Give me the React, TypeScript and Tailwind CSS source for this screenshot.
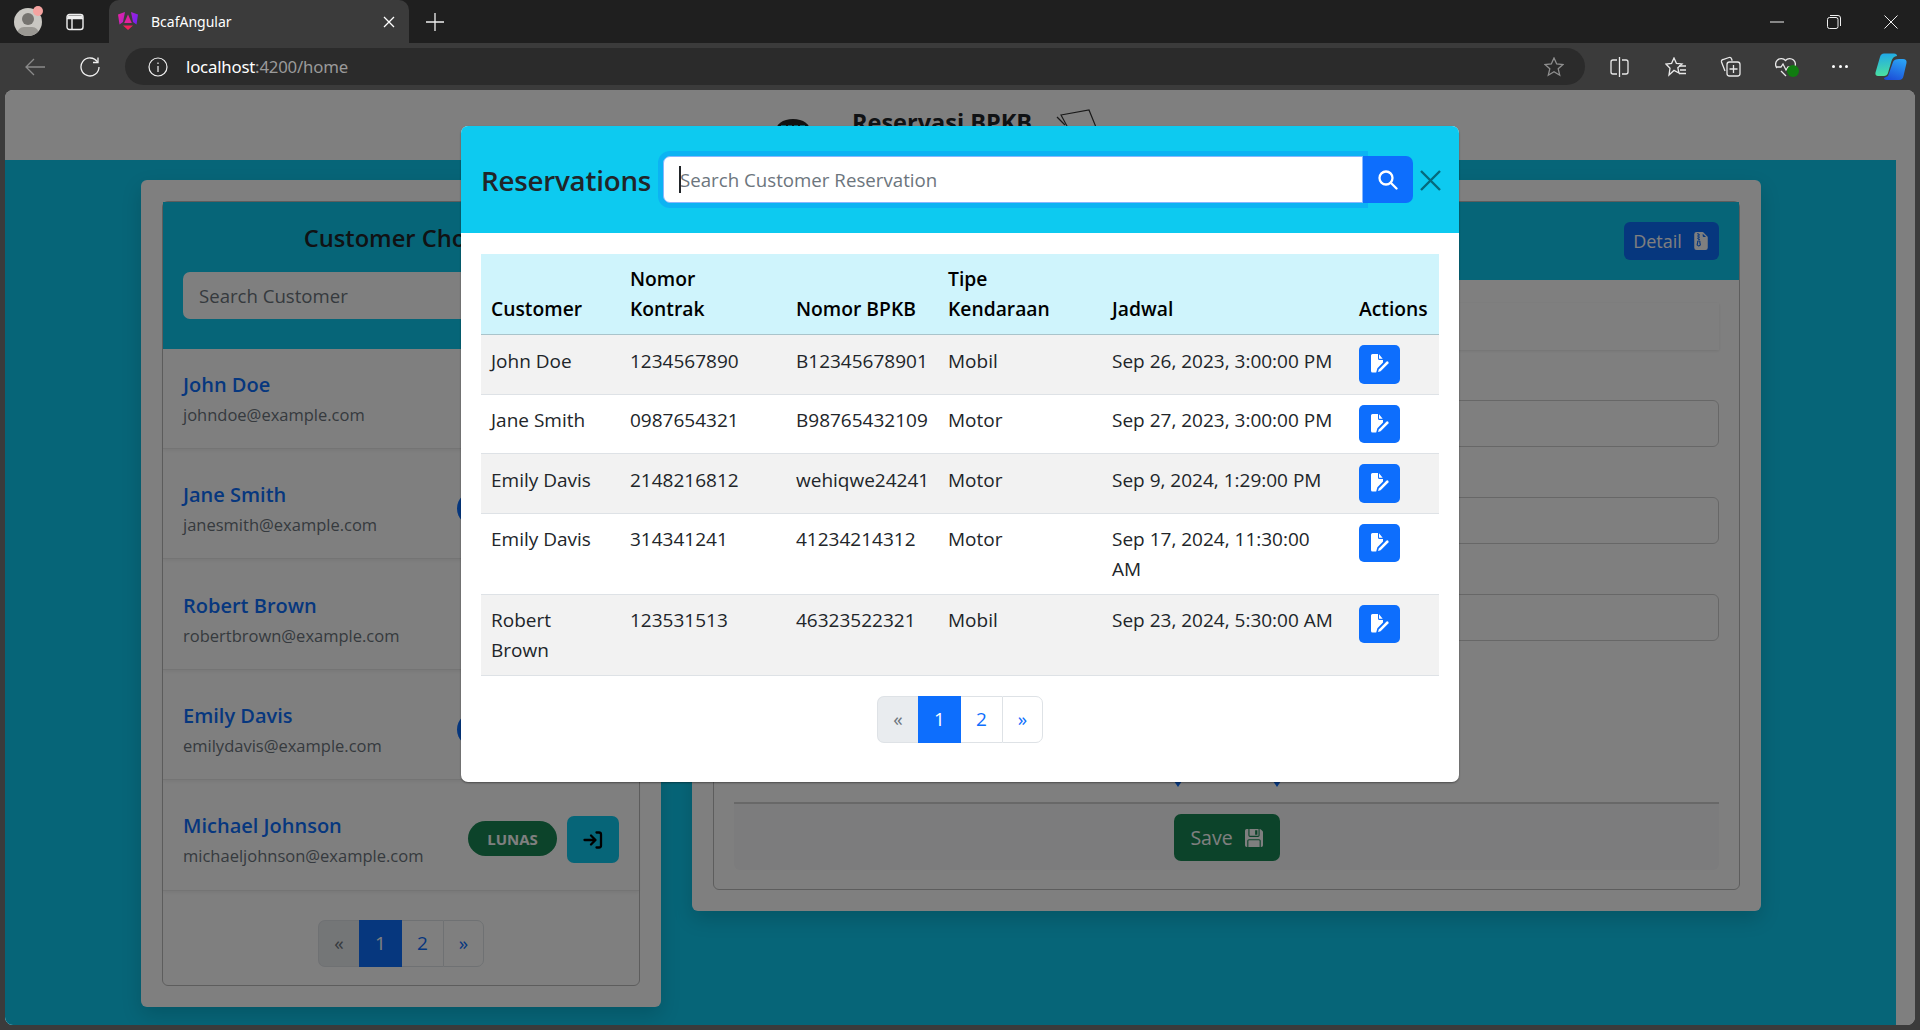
import { BsFileEarmarkZipFill, BsFloppyFill } from "react-icons/bs";

const font = "font-['Open_Sans','Noto_Sans',sans-serif]";

const customers = [
  { name: "John Doe", email: "johndoe@example.com", badge: null },
  { name: "Jane Smith", email: "janesmith@example.com", badge: "blue" },
  { name: "Robert Brown", email: "robertbrown@example.com", badge: null },
  { name: "Emily Davis", email: "emilydavis@example.com", badge: "blue" },
  { name: "Michael Johnson", email: "michaeljohnson@example.com", badge: "green" },
];

const reservations = [
  ["John Doe", "1234567890", "B12345678901", "Mobil", "Sep 26, 2023, 3:00:00 PM"],
  ["Jane Smith", "0987654321", "B98765432109", "Motor", "Sep 27, 2023, 3:00:00 PM"],
  ["Emily Davis", "2148216812", "wehiqwe24241", "Motor", "Sep 9, 2024, 1:29:00 PM"],
  ["Emily Davis", "314341241", "41234214312", "Motor", "Sep 17, 2024, 11:30:00\nAM"],
  ["Robert\nBrown", "123531513", "46323522321", "Mobil", "Sep 23, 2024, 5:30:00 AM"],
];

function FileEditIcon() {
  return (
    <svg width="22" height="20" viewBox="0 0 22 20" fill="white">
      <path d="M2 1.5A1.5 1.5 0 0 1 3.5 0H9v4.5A1.5 1.5 0 0 0 10.5 6H14v2.6l-5.6 5.6-1.2 4.3H3.500A1.500 1.500 0 0 1 2 17z" />
      <path d="M10 .3 13.700 4.700H10.500a.5.5 0 0 1-.5-.5z" />
      <path d="M17.600 7.600a1.300 1.300 0 0 1 1.800 1.800l-7.800 7.800-2.600.8.800-2.600z" />
    </svg>
  );
}

function Pagination() {
  return (
    <div className={`flex h-[47px] text-[19px] leading-none ${font}`}>
      <div className="flex w-[41px] items-center justify-center rounded-l-[7px] border border-r-0 border-[#dee2e6] bg-[#e9ecef] text-[#6c757d]">«</div>
      <div className="flex w-[43px] items-center justify-center bg-[#0d6efd] text-white">1</div>
      <div className="flex w-[41px] items-center justify-center border-y border-[#dee2e6] bg-white text-[#0d6efd]">2</div>
      <div className="flex w-[41px] items-center justify-center rounded-r-[7px] border border-[#dee2e6] bg-white text-[#0d6efd]">»</div>
    </div>
  );
}

function TabStrip() {
  return (
    <div className="flex h-[43px] bg-[#1f1f1f] text-white">
      <div className="flex w-[109px] items-center pl-[14px]">
        <div className="relative h-[28px] w-[28px] overflow-hidden rounded-full bg-[#c9c7c2]">
          <div className="absolute left-[8px] top-[5px] h-[12px] w-[12px] rounded-full bg-[#75736f]" />
          <div className="absolute left-[3px] top-[19px] h-[14px] w-[22px] rounded-full bg-[#9a9893]" />
        </div>
        <div className="absolute left-[33px] top-[6px] h-[10px] w-[10px] rounded-full bg-[#f5a3a0]" />
        <svg className="ml-[24px]" width="18" height="18" viewBox="0 0 18 18" fill="none" stroke="#f0f0f0" strokeWidth="1.400">
          <rect x="1" y="1.500" width="16" height="15" rx="2.500" />
          <path d="M1 5.500h16M6 5.500v11" />
          <path d="M1.500 2.500h15v3h-15z" fill="#f0f0f0" stroke="none" />
        </svg>
      </div>
      <div className="flex h-[43px] w-[300px] items-center rounded-t-[10px] bg-[#3b3b3b] pl-[9px] pr-[14px]">
        <svg width="20" height="21" viewBox="0 0 20 21">
          <defs>
            <linearGradient id="ng" x1="0" y1="0" x2="1" y2="0.300">
              <stop offset="0" stopColor="#f0229f" />
              <stop offset="1" stopColor="#7c22f0" />
            </linearGradient>
          </defs>
          <path d="M7 1 0 3.500l1.500 10L5 11zM13 1l7 2.500-1.500 10L15 11z" fill="url(#ng)" />
          <path d="M10 3.500 13.800 12H6.200z" fill="#e0229f" />
          <path d="M5 14.500h10L10 19z" fill="#f01f5c" />
        </svg>
        <span className="ml-[13px] flex-1 font-['Noto_Sans',sans-serif] text-[14px]">BcafAngular</span>
        <svg width="12" height="12" viewBox="0 0 12 12" stroke="white" strokeWidth="1.300">
          <path d="M1 1l10 10M11 1 1 11" />
        </svg>
      </div>
      <div className="flex w-[52px] items-center justify-center">
        <svg width="18" height="18" viewBox="0 0 18 18" stroke="#f0f0f0" strokeWidth="1.300">
          <path d="M9 0v18M0 9h18" />
        </svg>
      </div>
      <div className="flex-1" />
      <div className="flex w-[180px] items-center">
        <svg className="ml-[30px]" width="14" height="2" viewBox="0 0 14 2"><path d="M0 1h14" stroke="#f0f0f0" strokeWidth="1" /></svg>
        <svg className="ml-[43px]" width="14" height="14" viewBox="0 0 14 14" fill="none" stroke="#f0f0f0" strokeWidth="1">
          <rect x="0.500" y="2.500" width="10.500" height="11" rx="2" />
          <path d="M3 .5h8a2.500 2.500 0 0 1 2.500 2.500v8" />
        </svg>
        <svg className="ml-[43px]" width="14" height="14" viewBox="0 0 14 14" stroke="#f0f0f0" strokeWidth="1">
          <path d="M.5.5l13 13M13.500.5l-13 13" />
        </svg>
      </div>
    </div>
  );
}

function Toolbar() {
  return (
    <div className="flex h-[47px] items-center bg-[#3b3b3b] text-white">
      <svg className="ml-[25px]" width="20" height="18" viewBox="0 0 20 18" fill="none" stroke="#8a8a8a" strokeWidth="1.300">
        <path d="M20 9H1M9 1 1 9l8 8" />
      </svg>
      <svg className="ml-[35px]" width="20" height="20" viewBox="0 0 20 20" fill="none" stroke="#f0f0f0" strokeWidth="1.300">
        <path d="M17.500 5A9 9 0 1 0 19 10" />
        <path d="M18 .5V5.500H13" />
      </svg>
      <div className="ml-[25px] flex h-[37px] w-[1460px] items-center rounded-full bg-[#2b2b2b] pl-[23px] pr-[21px]">
        <svg width="20" height="20" viewBox="0 0 20 20" fill="none" stroke="#f0f0f0" strokeWidth="1.200">
          <circle cx="10" cy="10" r="9" />
          <path d="M10 9v6M10 5.500v1.500" />
        </svg>
        <span className="ml-[18px] font-['Noto_Sans',sans-serif] text-[16.800px] tracking-[-0.200px]">
          localhost<span className="text-[#9a9a9a]">:4200/home</span>
        </span>
        <div className="flex-1" />
        <svg width="20" height="20" viewBox="0 0 20 20" fill="none" stroke="#8f8f8f" strokeWidth="1.300">
          <path d="M10 1l2.700 6 6.300.6-4.800 4.200 1.500 6.400L10 14.800l-5.700 3.400 1.500-6.400L1 7.600 7.300 7z" />
        </svg>
      </div>
      <svg className="ml-[25px]" width="19" height="20" viewBox="0 0 19 20" fill="none" stroke="#e8e8e8" strokeWidth="1.300">
        <path d="M9.500 0v20M7 3H3a2 2 0 0 0-2 2v10a2 2 0 0 0 2 2h4M12 3h4a2 2 0 0 1 2 2v10a2 2 0 0 1-2 2h-4" />
      </svg>
      <svg className="ml-[36px]" width="21" height="20" viewBox="0 0 21 20" fill="none" stroke="#e8e8e8" strokeWidth="1.300">
        <path d="M9 1l2.400 5.300 5.600.6-4.200 3.800 1.200 5.400L9 13.400 4 18l1-6.800L1 7l5.600-.7z" />
        <path d="M14 9h7M15 13h6M14 16.500h7" />
      </svg>
      <svg className="ml-[34px]" width="21" height="21" viewBox="0 0 21 21" fill="none" stroke="#e8e8e8" strokeWidth="1.300">
        <path d="M5 15 1.500 6A2 2 0 0 1 3 3.500L9 1.500a2 2 0 0 1 2.500 1.200l.7 2" />
        <rect x="7" y="6" width="13" height="14" rx="2.500" />
        <path d="M13.500 9v8M9.500 13h8" />
      </svg>
      <div className="relative ml-[34px] h-[20px] w-[21px]">
        <svg width="21" height="20" viewBox="0 0 21 20" fill="none" stroke="#e8e8e8" strokeWidth="1.300">
          <path d="M2 11A5.500 5.500 0 0 1 10.500 3.500 5.500 5.500 0 0 1 19 11l-2 2M1 10h5l2-3 3 6 2-3h3M6 14l5 5" />
        </svg>
        <div className="absolute left-[12px] top-[8px] h-[12px] w-[12px] rounded-full bg-[#107c10]" />
      </div>
      <div className="ml-[36px] flex w-[16px] justify-between">
        <div className="h-[3px] w-[3px] rounded-full bg-white" />
        <div className="h-[3px] w-[3px] rounded-full bg-white" />
        <div className="h-[3px] w-[3px] rounded-full bg-white" />
      </div>
      <svg className="ml-[27px]" width="32" height="28" viewBox="0 0 32 28">
        <defs>
          <linearGradient id="cpA" x1="0.200" y1="0" x2="0.300" y2="1">
            <stop offset="0" stopColor="#1fa8ea" />
            <stop offset="1" stopColor="#4be0a0" />
          </linearGradient>
          <linearGradient id="cpB" x1="0.700" y1="0" x2="0.300" y2="1">
            <stop offset="0" stopColor="#2aa2f5" />
            <stop offset="1" stopColor="#1c4fd8" />
          </linearGradient>
        </defs>
        <path d="M24 6h4c2.500 0 4 1.500 3.500 4l-3 13c-.5 2.500-2 4-4.500 4H12c-2 0-3-1-3-2l4-2 5-14c.5-2 3-3 6-3z" fill="url(#cpB)" />
        <path d="M9 .5h10c2 0 3 1 3 2.500-3 .5-4.500 2-5.500 5L13 20c-.5 2-2 3-4 3H3c-2 0-3-1.500-2.500-3.500L5 4c.5-2 2-3.500 4-3.500z" fill="url(#cpA)" />
      </svg>
    </div>
  );
}

function CustomerRow({ name, email, badge, first }: { name: string; email: string; badge: string | null; first: boolean }) {
  return (
    <div className={`flex items-center border-b border-[#e9e9e9] px-[20px] shadow-[0_2px_3px_rgba(0,0,0,0.05)] ${first ? "h-[100px] pt-[2px]" : "h-[110.400px] pt-[12px]"}`}>
      <div className="flex-1">
        <div className="text-[20px] font-semibold leading-[31px] text-[#0d6efd]">{name}</div>
        <div className="text-[16.500px] leading-[30px] text-[#6c757d]">{email}</div>
      </div>
      {badge === "blue" && <div className="mr-[10px] h-[35px] w-[100px] -translate-y-px rounded-full bg-[#0d6efd]" />}
      {badge === "green" && (
        <div className="mr-[10px] flex h-[35px] w-[89px] -translate-y-[2px] items-center justify-center rounded-full bg-[#198754] text-[15px] font-bold text-white">
          LUNAS
        </div>
      )}
      {badge && (
        <div className="flex h-[47px] w-[52px] -translate-y-px items-center justify-center rounded-[7px] bg-[#0dcaf0]">
          <svg width="20" height="18" viewBox="0 0 20 18" fill="none" stroke="black" strokeWidth="2.300" strokeLinecap="round" strokeLinejoin="round">
            <path d="M1.500 9h10M8 4.500 12.500 9 8 13.500M13.500 1.500h2.500a2 2 0 0 1 2 2v11a2 2 0 0 1-2 2h-2.500" />
          </svg>
        </div>
      )}
    </div>
  );
}

function CustomerPanel() {
  return (
    <div className="flex h-[827px] w-[520px] flex-col rounded-[6px] bg-white p-[21px] shadow-[0_8px_20px_rgba(0,0,0,0.15)]">
      <div className="flex flex-1 flex-col rounded-[6px] border border-[#bbbbbb]">
        <div className="flex h-[147px] flex-col bg-[#0dcaf0] px-[20px]">
          <h2 className="mt-[16px] h-[54px] text-center text-[23.700px] font-semibold leading-[40px] text-[#212529]">Customer Choice</h2>
          <input
            placeholder="Search Customer"
            className="h-[47px] w-full rounded-[7px] bg-white pl-[16px] text-[18.600px] outline-none placeholder:text-[#6c757d]"
          />
        </div>
        {customers.map((c, i) => (
          <CustomerRow key={c.name} name={c.name} email={c.email} badge={c.badge} first={i === 0} />
        ))}
        <div className="flex flex-1 items-center justify-center pt-[12px]">
          <Pagination />
        </div>
      </div>
    </div>
  );
}

function FormPanel() {
  return (
    <div className="flex h-[731px] w-[1069px] flex-col rounded-[6px] bg-white p-[21px] shadow-[0_8px_20px_rgba(0,0,0,0.15)]">
      <div className="flex flex-1 flex-col rounded-[6px] border border-[#bbbbbb]">
        <div className="flex h-[78px] items-center justify-end bg-[#0dcaf0] pr-[20px]">
          <div className="flex h-[38px] w-[95px] items-center justify-center gap-[10px] rounded-[6px] bg-[#0d6efd] text-[18px] text-white">
            Detail <BsFileEarmarkZipFill className="text-[18px]" />
          </div>
        </div>
        <div className="flex flex-1 flex-col px-[20px]">
          <div className="mt-[23px] h-[47px] shadow-[0_1px_3px_rgba(0,0,0,0.1)]" />
          <div className="mt-[50px] h-[47px] rounded-[6px] border border-[#cfcfcf]" />
          <div className="mt-[50px] h-[47px] rounded-[6px] border border-[#cfcfcf]" />
          <div className="mt-[50px] h-[47px] rounded-[6px] border border-[#cfcfcf]" />
          <div className="relative mt-[161px] h-0">
            <div className="absolute left-[440px] top-[-21px] h-0 w-0 border-x-[4px] border-t-[6px] border-x-transparent border-t-[#0d6efd]" />
            <div className="absolute left-[539px] top-[-21px] h-0 w-0 border-x-[4px] border-t-[6px] border-x-transparent border-t-[#0d6efd]" />
          </div>
          <div className="flex h-[68px] justify-center rounded-b-[6px] border-t-2 border-[#d0d0d0] bg-[#f8f9fa] pt-[10px]">
            <div className="flex h-[47px] w-[106px] items-center justify-center gap-[12px] rounded-[7px] bg-[#198754] text-[19.500px] text-white">
              Save <BsFloppyFill className="text-[18px]" />
            </div>
          </div>
        </div>
      </div>
    </div>
  );
}

function ReservationsModal() {
  return (
    <div className="absolute left-[456px] top-[36px] flex h-[656px] w-[998px] flex-col overflow-hidden rounded-[7px] bg-white shadow-[0_1px_2px_rgba(0,0,0,0.4)]">
      <div className="flex h-[107px] items-center bg-[#0dcaf0] pl-[20px]">
        <h2 className="w-[182px] translate-y-px text-[27.700px] font-semibold tracking-[-0.200px] text-[#212529]">Reservations</h2>
        <div className="relative flex">
          <input
            placeholder="Search Customer Reservation"
            className="h-[47px] w-[700px] rounded-l-[7px] border border-[#86b7fe] bg-white pl-[16px] text-[18.700px] shadow-[0_0_0_5px_rgba(13,110,253,0.25)] outline-none placeholder:text-[#6c757d]"
          />
          <div className="absolute left-[16px] top-[10px] h-[27px] w-[2px] bg-[#212529]" />
          <div className="relative flex h-[47px] w-[50px] items-center justify-center rounded-r-[7px] bg-[#0d6efd]">
            <svg width="20" height="20" viewBox="0 0 20 20" fill="none" stroke="white" strokeWidth="2.300" strokeLinecap="round">
              <circle cx="8" cy="8" r="6.500" />
              <path d="M13 13l5.500 5.500" />
            </svg>
          </div>
        </div>
        <svg className="ml-[7px] translate-y-px" width="21" height="21" viewBox="0 0 21 21" stroke="#066a7d" strokeWidth="2.400">
          <path d="M1 1l19 19M20 1 1 20" />
        </svg>
      </div>
      <div className="flex flex-1 flex-col px-[20px] pt-[21px]">
        <table className="w-[958px] table-fixed border-collapse text-[19px] leading-[30px]">
          <thead>
            <tr className="border-b border-[#a9c4cb] bg-[#cff4fc] text-left align-bottom text-[19.300px] text-black">
              <th className="w-[139px] p-[10px] font-semibold">Customer</th>
              <th className="w-[166px] p-[10px] font-semibold">Nomor<br />Kontrak</th>
              <th className="w-[152px] p-[10px] font-semibold">Nomor BPKB</th>
              <th className="w-[164px] p-[10px] font-semibold">Tipe<br />Kendaraan</th>
              <th className="w-[247px] p-[10px] font-semibold">Jadwal</th>
              <th className="w-[90px] p-[10px] font-semibold">Actions</th>
            </tr>
          </thead>
          <tbody>
            {reservations.map((r, i) => (
              <tr key={r[1]} className={`border-b border-[#dee2e6] align-top text-[#212529] ${i % 2 === 0 ? "bg-[#f2f2f2]" : "bg-white"}`}>
                {r.map((cell, j) => (
                  <td key={j} className="whitespace-pre-line px-[10px] pb-[9.500px] pt-[10.500px]">{cell}</td>
                ))}
                <td className="p-[10px]">
                  <div className="flex h-[38.500px] w-[41px] items-center justify-center rounded-[5px] bg-[#0d6efd]">
                    <FileEditIcon />
                  </div>
                </td>
              </tr>
            ))}
          </tbody>
        </table>
        <div className="mt-[20px] flex justify-center">
          <Pagination />
        </div>
      </div>
    </div>
  );
}

export default function App() {
  return (
    <div className={`relative flex h-[1030px] w-[1920px] flex-col overflow-hidden bg-[#3b3b3b] ${font}`}>
      <TabStrip />
      <Toolbar />
      <div className="relative mx-[5px] h-[935px] overflow-hidden rounded-[8px] bg-white">
        <div className="flex h-full w-[1891px] flex-col">
          <div className="flex h-[70px] items-start pl-[769px] pt-[12px]">
            <svg className="mr-[40px] mt-[16px]" width="38" height="30" viewBox="0 0 38 30">
              <path d="M1 16C1 6 9 1 19 1s18 5 18 15v14H1z" fill="#222" />
              <path d="M7 7h24v6H7z" fill="#0dcaf0" />
              <path d="M12 7h2v6h-2zM18 7h2v6h-2zM24 7h2v6h-2z" fill="#222" />
            </svg>
            <h1 className="text-[23.500px] font-bold leading-[40px] text-[#212529]">Reservasi BPKB</h1>
            <svg className="ml-[24px] mt-[7px]" width="46" height="30" viewBox="0 0 46 30" fill="none" stroke="#333" strokeWidth="1.200">
              <path d="M5 6 33 1l11 27-26 2z" />
              <path d="M1 8l8 8" />
            </svg>
          </div>
          <div className="flex flex-1 items-start gap-[31px] bg-[#0dcaf0] pl-[136px] pt-[20px]">
            <CustomerPanel />
            <FormPanel />
          </div>
        </div>
        <div className="absolute inset-0 bg-black/50" />
        <ReservationsModal />
      </div>
    </div>
  );
}
